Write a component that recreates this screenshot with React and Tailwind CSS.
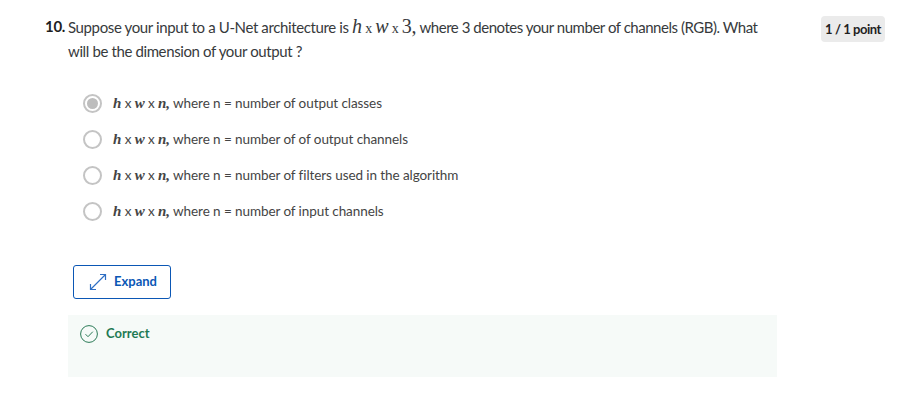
const options = [
  { text: "where n = number of output classes", selected: true },
  { text: "where n = number of of output channels" },
  { text: "where n = number of filters used in the algorithm" },
  { text: "where n = number of input channels" },
]

function Radio({ selected }) {
  return (
    <span className="flex h-[19px] w-[19px] shrink-0 items-center justify-center rounded-full border-2 border-[#c4c4c4] bg-white">
      {selected && <span className="h-[11px] w-[11px] rounded-full bg-[#bdbdbd]" />}
    </span>
  )
}

function MathVar({ children }) {
  return <span className="font-['Liberation_Serif',serif] text-[15px] font-bold italic text-[#444]">{children}</span>
}

export default function App() {
  return (
    <div className="h-[410px] w-[923px] overflow-hidden bg-white font-['Lato',sans-serif] text-[#373a3c]">
      <div className="flex items-start pl-[45px] pr-[38px] pt-[15px]">
        <div className="w-[23px] text-[15px] leading-[23px] font-bold tracking-[-0.3px] text-[#1f1f1f]">10.</div>
        <div className="w-[695px] text-[15px] leading-[23px] tracking-[-0.38px]">
          Suppose your input to a U-Net architecture is{" "}
          <span className="font-['Liberation_Serif',serif] text-[20px] italic">h</span>{" "}
          <span className="font-['Liberation_Serif',serif] text-[14px]">x</span>{" "}
          <span className="font-['Liberation_Serif',serif] text-[20px] italic">w</span>{" "}
          <span className="font-['Liberation_Serif',serif] text-[14px]">x</span>{" "}
          <span className="font-['Liberation_Serif',serif] text-[20px]">3,</span>{" "}
          <span className="tracking-[-0.47px]">where 3 denotes your number of channels (RGB). What</span> will be the dimension of your output ?
        </div>
        <div className="ml-auto mt-[1px] rounded bg-[#ebebeb] px-[4px] py-[3px] text-[13px] leading-[20px] font-bold tracking-[-0.45px] text-[#1f1f1f]">
          1 / 1 point
        </div>
      </div>

      <div className="mt-[28px] ml-[83px] flex flex-col gap-[12px]">
        {options.map((o) => (
          <div key={o.text} className="flex h-[24px] items-center gap-[11px]">
            <Radio selected={o.selected} />
            <div className="text-[13.5px] tracking-[-0.08px] whitespace-nowrap text-[#444]">
              <MathVar>h</MathVar> x <MathVar>w</MathVar> x <MathVar>n,</MathVar> {o.text}
            </div>
          </div>
        ))}
      </div>

      <div className="mt-[42px] ml-[73px] flex h-[34px] w-[98px] items-center gap-[7px] rounded-[3px] border border-[#0b57b5] pl-[15px]">
        <svg width="18" height="18" viewBox="0 0 18 18" fill="none" stroke="#2f6fc4" strokeWidth="1.2">
          <path d="M1.5 16.5 16.5 1.5M11 1.5h5.5V7M1.5 11v5.5H7" />
        </svg>
        <span className="text-[13px] font-bold text-[#0b57b5]">Expand</span>
      </div>

      <div className="mt-[16px] ml-[68px] h-[62px] w-[709px] bg-[#f6faf8] pl-[12px] pt-[9px]">
        <div className="flex items-center gap-[8px]">
          <svg width="18" height="18" viewBox="0 0 18 18" fill="none" stroke="#2b7a57" strokeWidth="1">
            <circle cx="9" cy="9" r="8.4" />
            <path d="m5.5 9.2 2.5 2.5 4.8-5" />
          </svg>
          <span className="text-[13px] font-bold text-[#1f7a54]">Correct</span>
        </div>
      </div>
    </div>
  )
}
